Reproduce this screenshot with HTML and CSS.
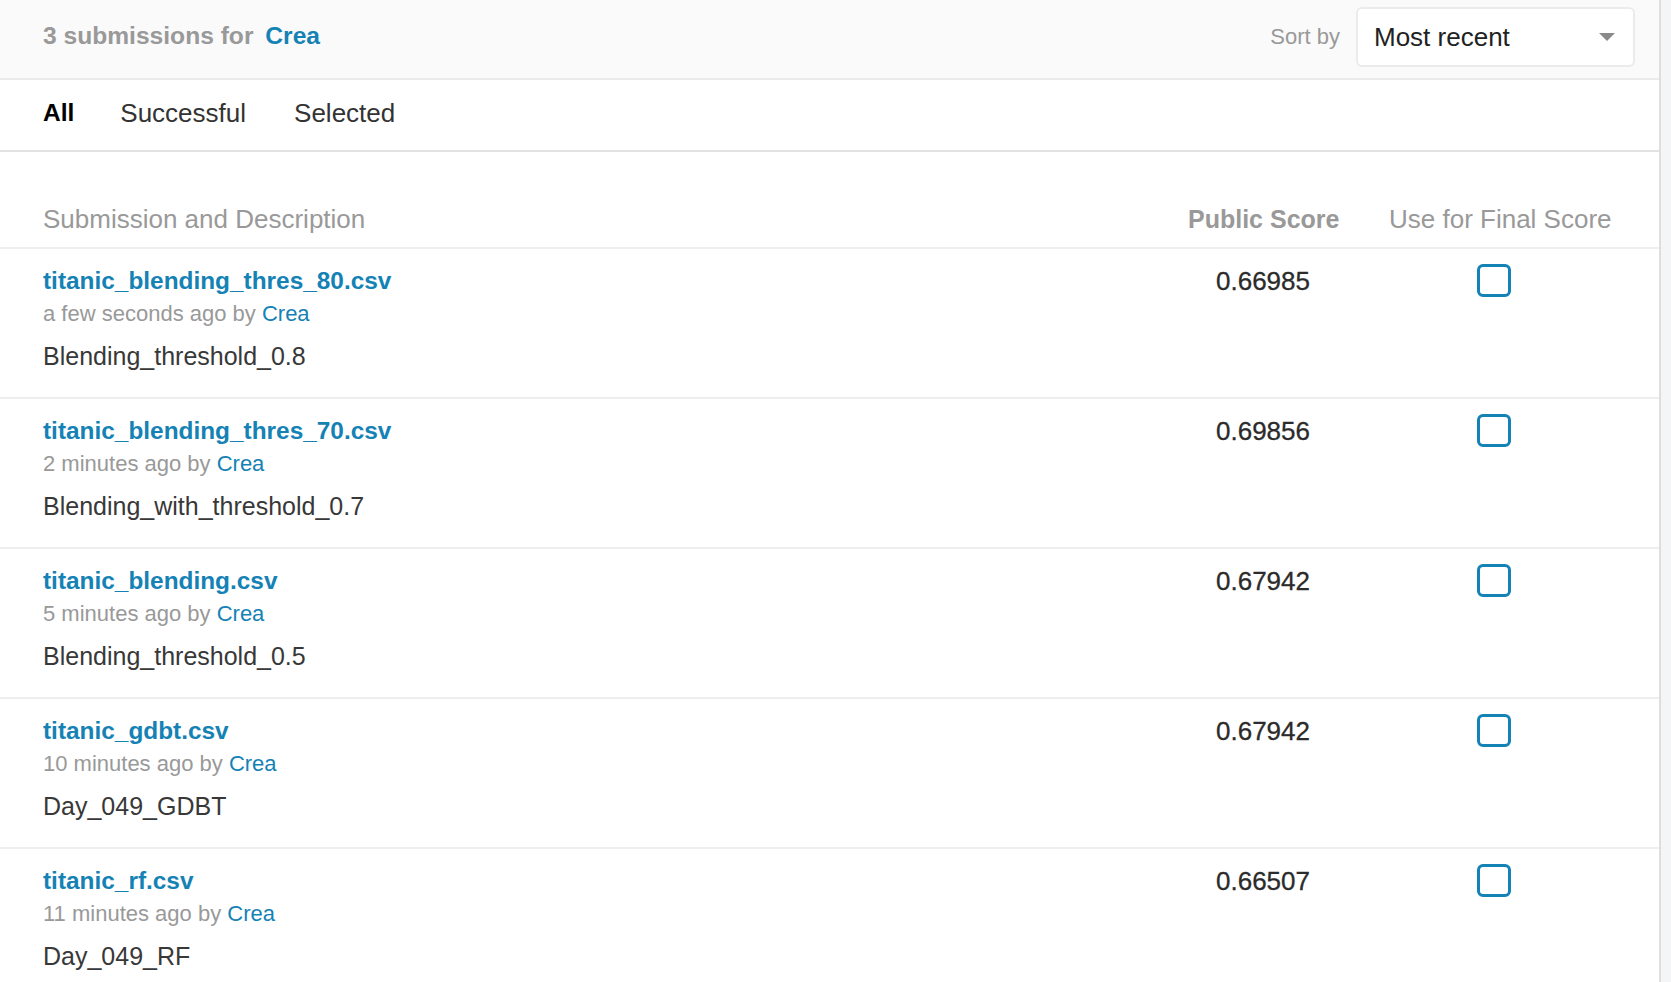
FILE: index.html
```html
<!DOCTYPE html>
<html lang="en">
<head>
<meta charset="utf-8">
<title>Submissions</title>
<link rel="stylesheet" href="styles.css">
</head>
<body>
<div class="page">
  <main class="main">
    <header class="topbar">
      <h1 class="count">3 submissions for <a class="link" href="#">Crea</a></h1>
      <div class="sort">
        <span class="sort-label">Sort by</span>
        <div class="select">
          <span>Most recent</span>
          <span class="caret"></span>
        </div>
      </div>
    </header>
    <nav class="tabs">
      <a class="tab active" href="#">All</a>
      <a class="tab" href="#">Successful</a>
      <a class="tab" href="#">Selected</a>
    </nav>
    <div class="table">
      <div class="thead">
        <div class="th">Submission and Description</div>
        <div class="th th-score">Public Score</div>
        <div class="th th-final">Use for Final Score</div>
      </div>
      <div class="row">
        <div class="sub">
          <a class="file" href="#">titanic_blending_thres_80.csv</a>
          <div class="meta">a few seconds ago by <a class="link-plain" href="#">Crea</a></div>
          <div class="desc">Blending_threshold_0.8</div>
        </div>
        <div class="score">0.66985</div>
        <div class="final"><span class="check"></span></div>
      </div>
      <div class="row">
        <div class="sub">
          <a class="file" href="#">titanic_blending_thres_70.csv</a>
          <div class="meta">2 minutes ago by <a class="link-plain" href="#">Crea</a></div>
          <div class="desc">Blending_with_threshold_0.7</div>
        </div>
        <div class="score">0.69856</div>
        <div class="final"><span class="check"></span></div>
      </div>
      <div class="row">
        <div class="sub">
          <a class="file" href="#">titanic_blending.csv</a>
          <div class="meta">5 minutes ago by <a class="link-plain" href="#">Crea</a></div>
          <div class="desc">Blending_threshold_0.5</div>
        </div>
        <div class="score">0.67942</div>
        <div class="final"><span class="check"></span></div>
      </div>
      <div class="row">
        <div class="sub">
          <a class="file" href="#">titanic_gdbt.csv</a>
          <div class="meta">10 minutes ago by <a class="link-plain" href="#">Crea</a></div>
          <div class="desc">Day_049_GDBT</div>
        </div>
        <div class="score">0.67942</div>
        <div class="final"><span class="check"></span></div>
      </div>
      <div class="row">
        <div class="sub">
          <a class="file" href="#">titanic_rf.csv</a>
          <div class="meta">11 minutes ago by <a class="link-plain" href="#">Crea</a></div>
          <div class="desc">Day_049_RF</div>
        </div>
        <div class="score">0.66507</div>
        <div class="final"><span class="check"></span></div>
      </div>
    </div>
  </main>
  <div class="gutter"></div>
</div>
</body>
</html>
```
FILE: styles.css
```css
html, body {
  margin: 0;
  padding: 0;
  overflow: hidden;
  height: 100%;
}
body {
  font-family: "Liberation Sans", Arial, sans-serif;
  color: #333;
  background: #fff;
}
a { text-decoration: none; }

.page {
  display: flex;
  min-height: 100%;
}
.main {
  flex: 1;
  border-right: 2px solid #dedede;
  background: #fff;
}
.gutter {
  width: 10px;
  background: #f3f5f6;
}

.topbar {
  height: 80px;
  box-sizing: border-box;
  display: flex;
  align-items: flex-start;
  justify-content: space-between;
  padding: 7px 24px 0 43px;
  background: #fafafa;
  border-bottom: 2px solid #ebebeb;
}
.count {
  margin: 14px 0 0;
  font-size: 24.6px;
  line-height: 30px;
  font-weight: bold;
  color: #999;
}
.link {
  color: #1582b5;
  margin-left: 5px;
}
.sort {
  display: flex;
  align-items: center;
  gap: 16px;
}
.sort-label {
  font-size: 22px;
  color: #999;
}
.select {
  width: 279px;
  height: 60px;
  box-sizing: border-box;
  border: 2px solid #ebebeb;
  border-radius: 6px;
  background: #fff;
  display: flex;
  align-items: center;
  justify-content: space-between;
  padding: 0 18px 0 16px;
  font-size: 26px;
  color: #222;
}
.caret {
  width: 0;
  height: 0;
  border-left: 8px solid transparent;
  border-right: 8px solid transparent;
  border-top: 8px solid #8a8a8a;
}

.tabs {
  height: 72px;
  box-sizing: border-box;
  display: flex;
  align-items: center;
  gap: 46px;
  padding: 0 43px 4px;
  border-bottom: 2px solid #e2e2e2;
}
.tab {
  font-size: 26px;
  color: #333;
}
.tab:last-child {
  margin-left: 2px;
}
.tab.active {
  font-size: 24.5px;
  font-weight: bold;
  color: #000;
}

.thead, .row {
  display: grid;
  grid-template-columns: 1fr 150px 220px;
  column-gap: 51px;
  padding: 0 50px 0 43px;
}
.thead {
  padding-top: 52px;
  padding-bottom: 13px;
}
.th {
  font-size: 26px;
  line-height: 30px;
  color: #999;
}
.th-score {
  font-size: 25px;
  font-weight: bold;
  text-align: center;
  white-space: nowrap;
}
.th-final {
  white-space: nowrap;
}

.row {
  border-top: 2px solid #eeeeee;
  padding-top: 17px;
  padding-bottom: 25px;
  align-items: start;
}
.sub {
  display: flex;
  flex-direction: column;
}
.file {
  font-size: 24.4px;
  line-height: 30px;
  font-weight: bold;
  color: #1582b5;
}
.meta {
  margin-top: 4px;
  font-size: 22px;
  line-height: 28px;
  color: #999;
}
.link-plain {
  color: #1582b5;
}
.desc {
  margin-top: 12px;
  font-size: 25px;
  line-height: 32px;
  color: #383838;
}
.score {
  font-size: 26px;
  line-height: 30px;
  text-align: center;
  color: #2b2b2b;
  -webkit-text-stroke: 0.3px #2b2b2b;
}
.final {
  padding-left: 88px;
}
.check {
  display: block;
  width: 34px;
  height: 33px;
  box-sizing: border-box;
  border: 3px solid #1582b5;
  border-radius: 6px;
  margin-top: -2px;
}
```
